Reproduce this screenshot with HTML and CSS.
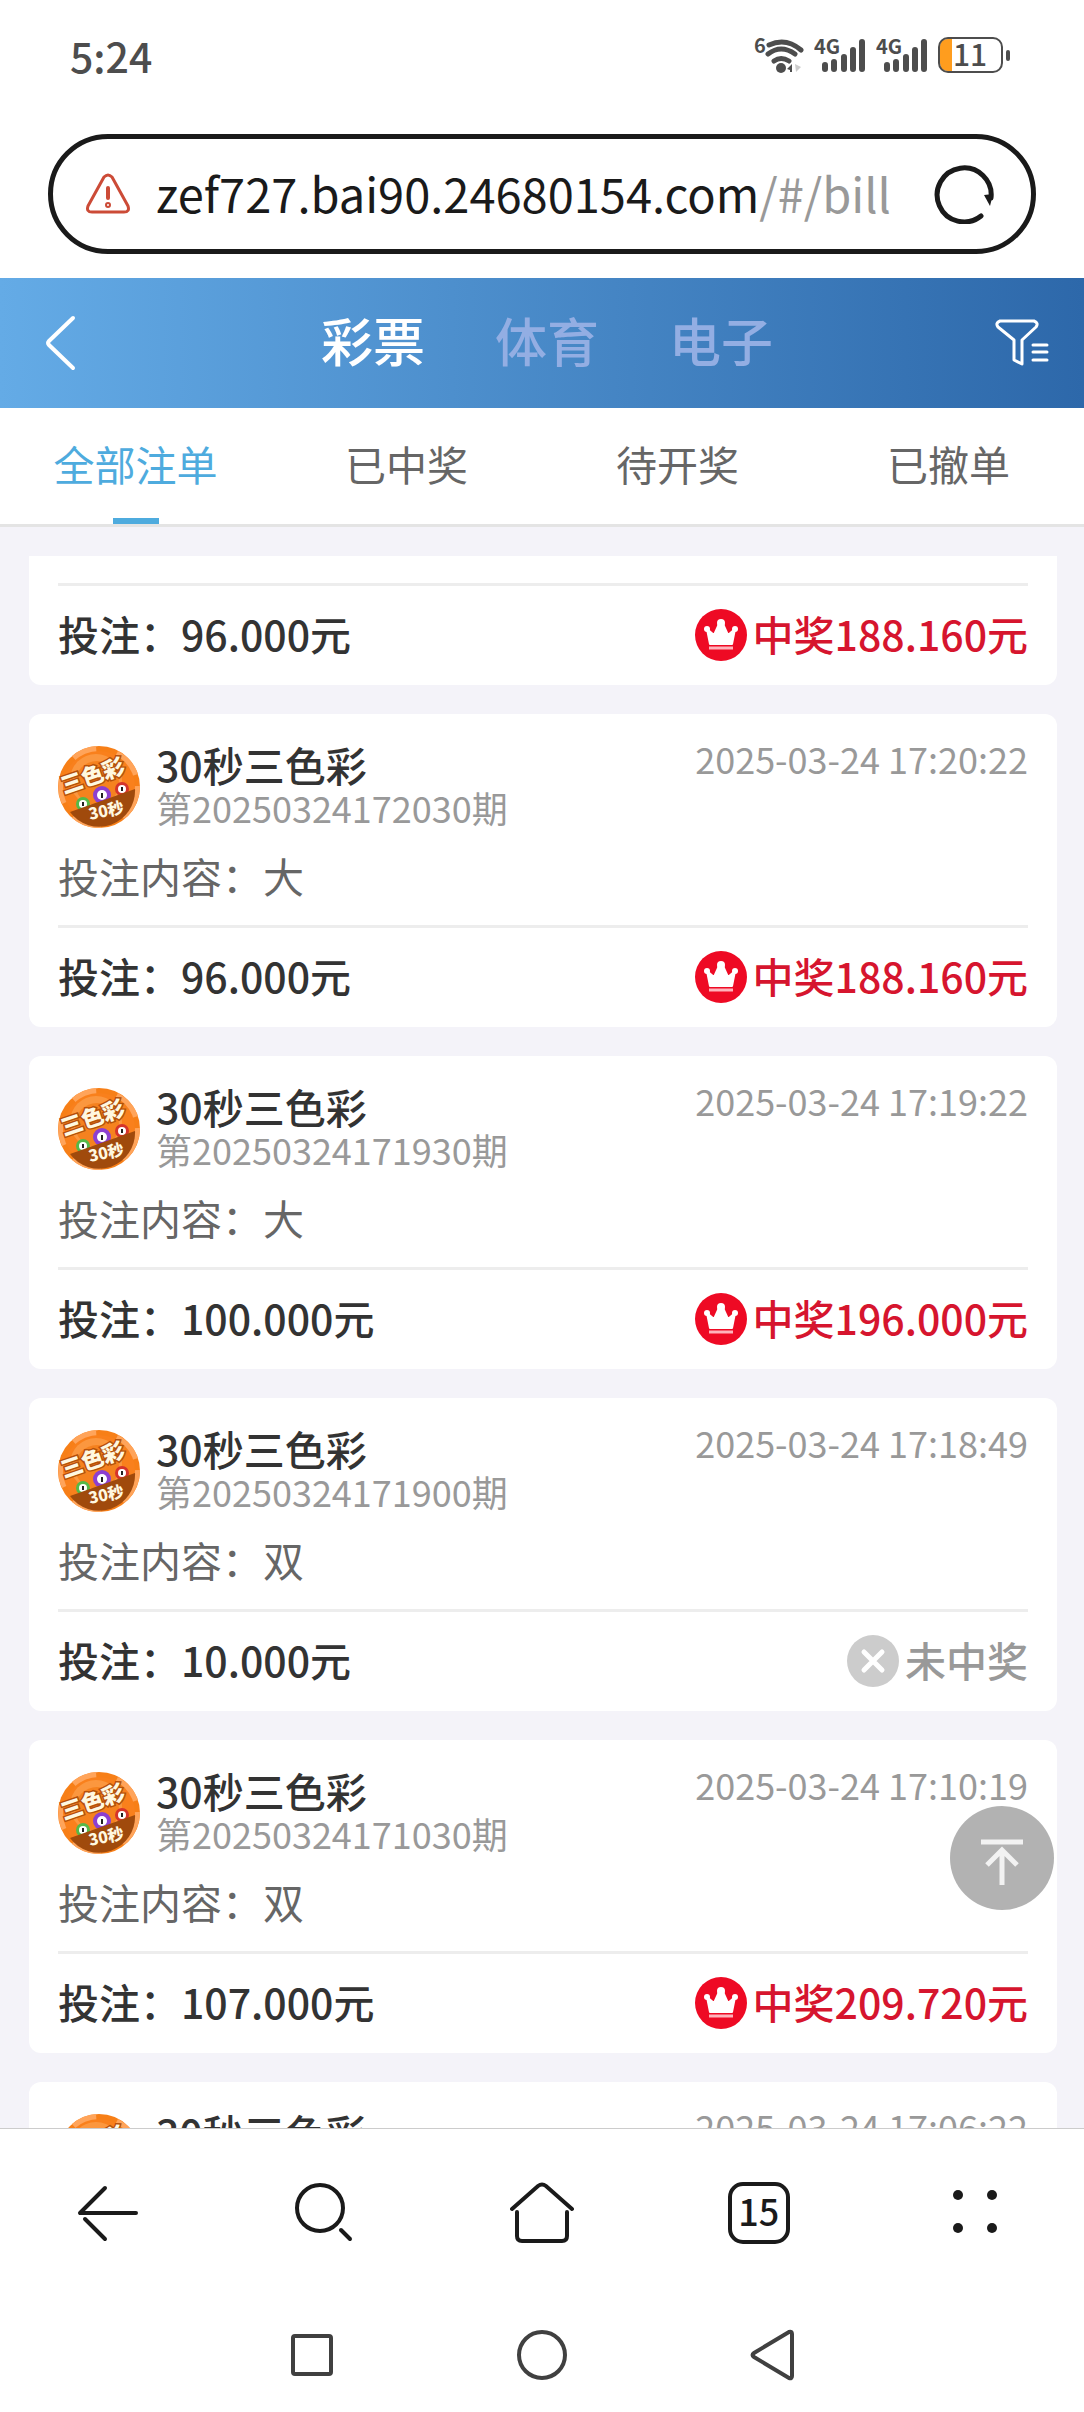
FILE: index.html
```html
<!DOCTYPE html>
<html lang="zh-CN">
  <head>
    <meta charset="utf-8">
    <meta name="viewport" content="width=device-width, initial-scale=1">
    <title>彩票</title>
    <link rel="stylesheet" href="styles.css">
  </head>
  <body>
    <!-- shared icons -->
    <svg class="sprite" aria-hidden="true">
      <symbol id="signal" viewBox="0 0 52 38">
        <text x="0" y="18" font-size="20" font-weight="700" fill="#4d4d4d">4G</text>
        <path d="M11 29v4M20 26v7M30 21v12M39 14v19M48 6v27" stroke="#4d4d4d" stroke-width="6" stroke-linecap="round" />
      </symbol>
      <symbol id="logo" viewBox="0 0 82 82">
        <circle cx="41" cy="41" r="41" fill="#f77f17" />
        <path d="M14 10A41 41 0 0 1 38 0L41 41ZM60 5A41 41 0 0 1 80 28L41 41ZM82 40A41 41 0 0 1 66 73L41 41ZM43 82A41 41 0 0 1 14 72L41 41ZM4 58A41 41 0 0 1 1 33L41 41Z" fill="#ffa45a" />
        <circle cx="41" cy="41" r="36" fill="#f9801c" />
        <circle cx="38" cy="34" r="26" fill="#fb973f" />
        <circle cx="39" cy="37" r="22" fill="#f5821f" />
        <circle cx="25" cy="58" r="7" fill="#55b948" />
        <circle cx="44" cy="49" r="9" fill="#8c3fd0" />
        <circle cx="64" cy="43" r="7" fill="#d5342b" />
        <circle cx="25" cy="58" r="4" fill="#fff" />
        <circle cx="44" cy="49" r="5" fill="#fff" />
        <circle cx="64" cy="43" r="4" fill="#fff" />
        <path d="M25 56v4M44 47v5M64 41v4" stroke="#222" stroke-width="2" />
        <path d="M12 66L77 43A36 36 0 0 1 12 66Z" fill="#a04a0c" />
        <text x="6" y="48" font-size="22" font-weight="900" fill="#fff8e0" stroke="#b4500a" stroke-width="3" paint-order="stroke" transform="rotate(-19 6 48)">三色彩</text>
        <text x="32" y="74" font-size="16" font-weight="900" fill="#fff8e0" transform="rotate(-12 32 74)">30秒</text>
      </symbol>
      <symbol id="crown" viewBox="0 0 52 52">
        <circle cx="26" cy="26" r="26" fill="#ee0a24" />
        <path d="M12 20L19 26L24 15H28L33 26L40 20L37 35H15Z" fill="#fff" stroke="#fff" stroke-width="2" stroke-linejoin="round" />
        <circle cx="12" cy="20" r="3" fill="#fff" />
        <circle cx="26" cy="14" r="4" fill="#fff" />
        <circle cx="40" cy="20" r="3" fill="#fff" />
        <path d="M14 39H38" stroke="#ffb3bb" stroke-width="3" />
      </symbol>
      <symbol id="miss" viewBox="0 0 52 52">
        <circle cx="26" cy="26" r="26" fill="#ccc" />
        <path d="M17 17L35 35M35 17L17 35" stroke="#fff" stroke-width="5" stroke-linecap="round" />
      </symbol>
    </svg>

    <div class="status">
      <span class="time">5:24</span>
      <div class="status-icons">
        <svg width="50" height="38" viewBox="0 0 50 38">
          <text x="0" y="17" font-size="20" font-weight="700" fill="#4d4d4d">6</text>
          <g fill="none" stroke="#4d4d4d" stroke-width="5" stroke-linecap="round">
            <path d="M15 9Q32 1 47 14M14 18Q27 8 41 18M20 25Q27 20 35 25" />
          </g>
          <circle cx="27" cy="32" r="5" fill="#4d4d4d" />
          <path d="M33 33L38 28V36H36V34Z" fill="#4d4d4d" />
          <path d="M41 28L47 31L42 36Z" fill="#ccc" />
        </svg>
        <svg width="52" height="38"><use href="#signal" /></svg>
        <svg width="52" height="38"><use href="#signal" /></svg>
        <svg width="74" height="38" viewBox="0 0 74 38">
          <path d="M10 3H14V35H10Q2 35 2 27V11Q2 3 10 3Z" fill="#ff9d1e" />
          <rect x="1" y="2" width="63" height="34" rx="9" fill="none" stroke="#4d4d4d" stroke-width="2" />
          <text x="32" y="30" font-size="30" font-weight="500" fill="#4d4d4d" text-anchor="middle">11</text>
          <path d="M70 16v7" stroke="#4d4d4d" stroke-width="4" stroke-linecap="round" />
        </svg>
      </div>
    </div>

    <div class="address">
      <svg width="46" height="42" viewBox="0 0 46 42" fill="none" stroke="#cc4b37" stroke-width="3">
        <path d="M19 4Q23 0 27 4L43 33Q45 39 39 39H7Q1 39 3 33Z" stroke-linejoin="round" />
        <path d="M23 15V25" stroke-width="4" stroke-linecap="round" />
        <circle cx="23" cy="32" r="1" stroke-width="4" />
      </svg>
      <button class="url">zef727.bai90.24680154.com<span class="path">/#/bill</span></button>
      <button class="icon-btn" aria-label="刷新">
        <svg width="60" height="60" viewBox="0 0 60 60">
          <path d="M47 52A27 27 0 1 1 57 34" fill="none" stroke="#1a1a1a" stroke-width="5" stroke-linecap="round" />
          <path d="M50 31L59 30L56 42Z" fill="#1a1a1a" />
        </svg>
      </button>
    </div>

    <header class="header">
      <button class="icon-btn" aria-label="返回">
        <svg width="32" height="56" viewBox="0 0 32 56" fill="none" stroke="#fff" stroke-width="4" stroke-linecap="round" stroke-linejoin="round">
          <path d="M28 3L4 26Q2 28 4 30L28 53" />
        </svg>
      </button>
      <nav class="types">
        <a href="#lottery" class="active">彩票</a>
        <a href="#sports">体育</a>
        <a href="#games">电子</a>
      </nav>
      <button class="icon-btn" aria-label="筛选">
        <svg width="54" height="48" viewBox="0 0 54 48" fill="none" stroke="#fff" stroke-width="3" stroke-linecap="round" stroke-linejoin="round">
          <path d="M5 2H39Q44 4 41 8L27 21V45L19 41V21L3 8Q0 4 5 2Z" />
          <path d="M38 26H52M38 33H52M38 41H52" />
        </svg>
      </button>
    </header>

    <nav class="tabs">
      <a href="#all" class="active">全部注单</a>
      <a href="#won">已中奖</a>
      <a href="#pending">待开奖</a>
      <a href="#cancelled">已撤单</a>
    </nav>

    <main class="content">
      <div class="list">
        <div class="card cut">
          <div class="foot">
            <span>投注：96.000元</span>
            <span class="result win"><svg width="52" height="52"><use href="#crown" /></svg>中奖188.160元</span>
          </div>
        </div>

        <div class="card">
          <div class="head">
            <svg width="82" height="82"><use href="#logo" /></svg>
            <div class="name">
              <h2>30秒三色彩</h2>
              <p>第20250324172030期</p>
            </div>
            <time>2025-03-24 17:20:22</time>
          </div>
          <p class="bet">投注内容：大</p>
          <div class="foot">
            <span>投注：96.000元</span>
            <span class="result win"><svg width="52" height="52"><use href="#crown" /></svg>中奖188.160元</span>
          </div>
        </div>

        <div class="card">
          <div class="head">
            <svg width="82" height="82"><use href="#logo" /></svg>
            <div class="name">
              <h2>30秒三色彩</h2>
              <p>第20250324171930期</p>
            </div>
            <time>2025-03-24 17:19:22</time>
          </div>
          <p class="bet">投注内容：大</p>
          <div class="foot">
            <span>投注：100.000元</span>
            <span class="result win"><svg width="52" height="52"><use href="#crown" /></svg>中奖196.000元</span>
          </div>
        </div>

        <div class="card">
          <div class="head">
            <svg width="82" height="82"><use href="#logo" /></svg>
            <div class="name">
              <h2>30秒三色彩</h2>
              <p>第20250324171900期</p>
            </div>
            <time>2025-03-24 17:18:49</time>
          </div>
          <p class="bet">投注内容：双</p>
          <div class="foot">
            <span>投注：10.000元</span>
            <span class="result lose"><svg width="52" height="52"><use href="#miss" /></svg>未中奖</span>
          </div>
        </div>

        <div class="card">
          <div class="head">
            <svg width="82" height="82"><use href="#logo" /></svg>
            <div class="name">
              <h2>30秒三色彩</h2>
              <p>第20250324171030期</p>
            </div>
            <time>2025-03-24 17:10:19</time>
          </div>
          <p class="bet">投注内容：双</p>
          <div class="foot">
            <span>投注：107.000元</span>
            <span class="result win"><svg width="52" height="52"><use href="#crown" /></svg>中奖209.720元</span>
          </div>
        </div>

        <div class="card">
          <div class="head">
            <svg width="82" height="82"><use href="#logo" /></svg>
            <div class="name">
              <h2>30秒三色彩</h2>
            </div>
            <time>2025-03-24 17:06:22</time>
          </div>
        </div>
      </div>

      <button class="to-top" aria-label="回到顶部">
        <svg width="104" height="104" viewBox="0 0 104 104" fill="none" stroke="#f2f2f2" stroke-width="5">
          <path d="M31 36H73M52 44V79M37 59L52 44L67 59" />
        </svg>
      </button>
    </main>

    <nav class="toolbar">
      <button class="icon-btn" aria-label="后退">
        <svg width="64" height="64" viewBox="0 0 64 64" fill="none" stroke="#1a1a1a" stroke-width="4" stroke-linecap="round">
          <path d="M29 7L4 32H60M9 38L29 58" stroke-linejoin="round" />
        </svg>
      </button>
      <button class="icon-btn" aria-label="搜索">
        <svg width="64" height="64" viewBox="0 0 64 64" fill="none" stroke="#1a1a1a" stroke-width="4" stroke-linecap="round">
          <circle cx="27" cy="27" r="23" />
          <path d="M48 49L57 58" />
        </svg>
      </button>
      <button class="icon-btn" aria-label="主页">
        <svg width="64" height="64" viewBox="0 0 64 64" fill="none" stroke="#1a1a1a" stroke-width="4" stroke-linecap="round">
          <path d="M2 28L28 5Q32 2 36 5L62 28" />
          <path d="M7 31V55Q7 60 12 60H52Q57 60 57 55V31" />
        </svg>
      </button>
      <button class="icon-btn" aria-label="标签页"><span class="count">15</span></button>
      <button class="icon-btn" aria-label="菜单">
        <svg width="64" height="64" viewBox="0 0 64 64" fill="#1a1a1a">
          <circle cx="14" cy="14" r="5" />
          <circle cx="48" cy="14" r="5" />
          <circle cx="14" cy="47" r="5" />
          <circle cx="48" cy="47" r="5" />
        </svg>
      </button>
    </nav>

    <nav class="system">
      <button class="icon-btn" aria-label="最近任务">
        <svg width="52" height="52" viewBox="0 0 52 52" fill="none" stroke="#404040" stroke-width="4">
          <rect x="7" y="7" width="38" height="38" rx="2" />
        </svg>
      </button>
      <button class="icon-btn" aria-label="桌面">
        <svg width="52" height="52" viewBox="0 0 52 52" fill="none" stroke="#404040" stroke-width="4">
          <circle cx="26" cy="26" r="23" />
        </svg>
      </button>
      <button class="icon-btn" aria-label="返回">
        <svg width="52" height="52" viewBox="0 0 52 52" fill="none" stroke="#404040" stroke-width="4" stroke-linejoin="round">
          <path d="M43 3Q46 2 46 5V47Q46 50 43 49L8 28Q5 26 8 24Z" />
        </svg>
      </button>
    </nav>
  </body>
</html>
```
FILE: styles.css
```css
* {
  box-sizing: border-box;
}

body {
  display: flex;
  flex-direction: column;
  height: 100vh;
  margin: 0;
  background: #fff;
  color: #333;
  font-family: "Noto Sans CJK SC", sans-serif;
  font-size: 41px;
}

h2, p {
  margin: 0;
}

a {
  color: inherit;
  text-decoration: none;
}

button {
  padding: 0;
  border: 0;
  background: none;
  color: inherit;
  font-family: inherit;
}

svg {
  display: block;
  flex: none;
}

.sprite {
  display: none;
}

.icon-btn {
  display: flex;
  align-items: center;
  justify-content: center;
}

/* phone status bar */
.status {
  display: flex;
  flex: none;
  align-items: center;
  justify-content: space-between;
  height: 110px;
  padding: 0 72px 0 70px;
}

.time {
  color: #4d4d4d;
  font-size: 41px;
  font-weight: 500;
}

.status-icons {
  display: flex;
  gap: 10px;
}

/* address bar */
.address {
  display: flex;
  flex: none;
  align-items: center;
  height: 120px;
  margin: 24px 48px;
  padding: 0 37px 0 32px;
  border: 5px solid #1a1a1a;
  border-radius: 60px;
}

.url {
  flex: 1;
  margin-left: 25px;
  padding-bottom: 4px;
  color: #1a1a1a;
  font-size: 47px;
  text-align: left;
  white-space: nowrap;
}

.path {
  color: #999;
}

/* page header */
.header {
  display: grid;
  flex: none;
  grid-template-columns: 1fr auto 1fr;
  align-items: center;
  height: 130px;
  padding: 0 35px 0 45px;
  background: linear-gradient(90deg, #64abe6, #2d68aa);
}

.header .icon-btn:first-child {
  justify-self: start;
}

.header .icon-btn:last-child {
  justify-self: end;
}

.types {
  display: flex;
  gap: 70px;
  padding-bottom: 8px;
  color: #93aee3;
  font-size: 52px;
  font-weight: 500;
}

.types .active {
  color: #fff;
}

.tabs {
  display: flex;
  flex: none;
  height: 119px;
  border-bottom: 3px solid #e4e4e4;
  color: #666;
}

.tabs a {
  position: relative;
  flex: 1;
  line-height: 110px;
  text-align: center;
}

.tabs .active {
  color: #4eabde;
}

.tabs .active::after {
  content: "";
  position: absolute;
  bottom: 0;
  left: 50%;
  width: 46px;
  height: 6px;
  margin-left: -23px;
  background: #4eabde;
}

/* bet list */
.content {
  position: relative;
  flex: 1;
  min-height: 0;
  background: #f4f3f9;
}

.list {
  display: flex;
  flex-direction: column;
  gap: 29px;
  height: 100%;
  padding: 29px 27px 0 29px;
  overflow: hidden;
}

.card {
  flex: none;
  padding: 30px 29px 0;
  border-radius: 12px;
  background: #fff;
}

.cut {
  padding-top: 27px;
  border-radius: 0 0 12px 12px;
}

.head {
  display: flex;
  align-items: flex-start;
  height: 86px;
}

.head svg {
  margin-top: 2px;
}

.name {
  flex: 1;
  margin-left: 16px;
}

.name h2 {
  font-size: 41px;
  font-weight: 500;
  line-height: 40px;
}

.name p {
  color: #999;
  font-size: 36px;
  line-height: 46px;
}

time {
  color: #999;
  font-size: 36px;
  line-height: 28px;
}

.bet {
  padding: 15px 0 20px;
  color: #666;
  line-height: 60px;
}

.foot {
  display: flex;
  align-items: center;
  justify-content: space-between;
  height: 102px;
  padding-bottom: 5px;
  border-top: 3px solid #ededed;
  font-weight: 500;
}

.result {
  display: flex;
  align-items: center;
  gap: 6px;
}

.result svg {
  margin-top: 4px;
}

.win {
  color: #d6152e;
}

.lose {
  color: #999;
}

.to-top {
  position: absolute;
  right: 30px;
  bottom: 218px;
  border-radius: 50%;
  background: #b2b2b2;
}

/* browser toolbar and system keys */
.toolbar {
  display: grid;
  flex: none;
  grid-template-columns: repeat(5, 1fr);
  height: 169px;
  border-top: 1px solid #ccc;
}

.count {
  width: 62px;
  height: 62px;
  border: 4px solid #1a1a1a;
  border-radius: 15px;
  color: #1a1a1a;
  font-size: 36px;
  font-weight: 500;
  line-height: 48px;
}

.system {
  display: flex;
  flex: none;
  justify-content: center;
  gap: 178px;
  height: 115px;
}
```
